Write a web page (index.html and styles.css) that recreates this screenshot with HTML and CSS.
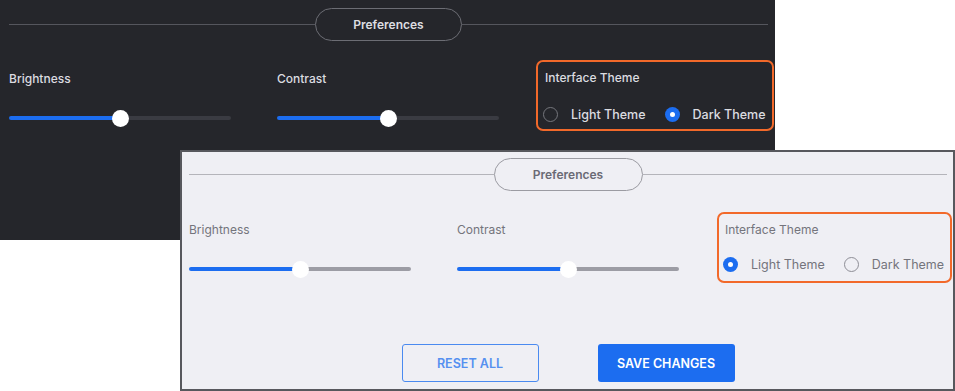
FILE: index.html
```html
<!DOCTYPE html>
<html>
<head>
<meta charset="UTF-8">
<title>Preferences</title>
<link rel="stylesheet" href="styles.css">
</head>
<body>

	<div class="stage">

		<!-- dark version -->
		<div class="panel dark">
			<div class="head">
				<span class="rule"></span>
				<span class="pill">Preferences</span>
				<span class="rule"></span>
			</div>
			<div class="row">
				<div class="col">
					<div class="label">Brightness</div>
					<div class="slider"><span class="fill" style="width:50%"></span><span class="knob"></span><span class="rest"></span></div>
				</div>
				<div class="col second">
					<div class="label">Contrast</div>
					<div class="slider"><span class="fill" style="width:50%"></span><span class="knob"></span><span class="rest"></span></div>
				</div>
				<div class="theme">
					<div class="label">Interface Theme</div>
					<div class="radios">
						<label class="radio"><span class="dot"></span>Light Theme</label>
						<label class="radio on"><span class="dot"></span>Dark Theme</label>
					</div>
				</div>
			</div>
		</div>

		<!-- light version, lies over the dark one -->
		<div class="panel light">
			<div class="head">
				<span class="rule"></span>
				<span class="pill">Preferences</span>
				<span class="rule"></span>
			</div>
			<div class="row">
				<div class="col">
					<div class="label">Brightness</div>
					<div class="slider"><span class="fill" style="width:50%"></span><span class="knob"></span><span class="rest"></span></div>
				</div>
				<div class="col second">
					<div class="label">Contrast</div>
					<div class="slider"><span class="fill" style="width:50%"></span><span class="knob"></span><span class="rest"></span></div>
				</div>
				<div class="theme">
					<div class="label">Interface Theme</div>
					<div class="radios">
						<label class="radio on"><span class="dot"></span>Light Theme</label>
						<label class="radio"><span class="dot"></span>Dark Theme</label>
					</div>
				</div>
			</div>
			<div class="buttons">
				<button class="btn ghost">RESET ALL</button>
				<button class="btn solid">SAVE CHANGES</button>
			</div>
		</div>

	</div>

</body>
</html>
```

FILE: styles.css
```css
body, div, span, label, button{
	margin : 0;
	padding : 0;
	box-sizing : border-box;
}
body{
	background : #ffffff;
	font-family : Inter, "Noto Sans", sans-serif;
	font-size : 12px;
}
.stage{
	position : relative;
	width : 955px;
	height : 391px;
}

/* panel common */
.panel{
	width : 775px;
}
.dark{
	height : 240px;
	background : #25262b;
	padding : 8px 7px 0 9px;
}
.light{
	position : absolute; /* second window drawn over the first one */
	left : 180px;
	top : 150px;
	height : 241px;
	background : #efeff4;
	border : 2px solid #57585d;
	padding : 6px 6px 0 7px;
}

/* header with pill */
.head{
	display : flex;
	align-items : center;
	height : 33px;
}
.rule{
	flex : 1;
	height : 1px;
}
.pill{
	width : 147px;
	height : 33px;
	line-height : 31px;
	border-radius : 17px;
	text-align : center;
	font-size : 12px;
	font-weight : 600;
}
.dark .rule{ background : #55565d; }
.dark .pill{ border : 1px solid #6c6d74; color : #dedee2; }
.light .rule{ background : #b4b4ba; }
.light .pill{ border : 1px solid #9b9ba2; color : #6a6a74; width : 149px; }

/* columns */
.row{
	display : flex;
	margin-top : 19px;
}
.light .row{ margin-top : 21px; }
.col{
	width : 222px;
	flex : none;
	padding-top : 11px;
}
.light .col{ padding-top : 10px; }
.col.second{
	margin-left : 46px;
}
.label{
	line-height : 16px;
	font-size : 12px;
	white-space : nowrap;
}
.dark .label{ color : #dcdce0; font-weight : 500; }
.light .label{ color : #74747c; }
.theme .label{ padding-left : 2px; }

/* sliders */
.slider{
	display : flex;
	align-items : center;
	height : 16px;
	margin-top : 23px;
}
.fill{
	height : 4px;
	border-radius : 2px 0 0 2px;
	background : #1c6df0;
	margin-right : -8px;
}
.knob{
	width : 17px;
	height : 17px;
	border-radius : 50%;
	background : #ffffff;
	position : relative; /* thumb sits over the track */
	z-index : 1;
	flex : none;
}
.rest{
	flex : 1;
	height : 4px;
	border-radius : 0 2px 2px 0;
	margin-left : -8px;
}
.dark .rest{ background : #3a3b42; }
.light .rest{ background : #9c9ca4; }

/* interface theme box */
.theme{
	flex : none;
	width : 238px;
	margin-left : 37px;
	border : 2px solid #f2692a;
	border-radius : 7px;
	padding : 8px 0 7px 5px;
	height : 71px;
}
.light .theme{ width : 235px; margin-left : 38px; padding-left : 4px; }
.radios{
	display : flex;
	margin-top : 20px;
}
.light .radios{ margin-top : 18px; }
.radio{
	display : flex;
	align-items : center;
	height : 16px;
	font-size : 12.5px;
	margin-right : 19px;
	white-space : nowrap;
	flex : none;
}
.dark .radio{ color : #dcdce0; font-weight : 500; }
.light .radio{ color : #74747c; }
.dot{
	width : 15px;
	height : 15px;
	border-radius : 50%;
	margin-right : 13px;
	flex : none;
}
.dark .dot{ border : 1.5px solid #75767c; }
.light .dot{ border : 1px solid #8e8e96; }
.radio.on .dot{
	border : none;
	background : #1c6df0;
	position : relative;
}
.radio.on .dot::after{
	content : "";
	position : absolute; /* centre mark of the checked radio */
	left : 5px;
	top : 5px;
	width : 5px;
	height : 5px;
	border-radius : 50%;
	background : #ffffff;
}

/* buttons */
.buttons{
	display : flex;
	justify-content : center;
	gap : 59px;
	margin-top : 61px;
}
.btn{
	width : 137px;
	height : 38px;
	border-radius : 3px;
	font-family : Inter, "Noto Sans", sans-serif;
	font-size : 12.5px;
	font-weight : 600;
	cursor : pointer;
}
.ghost{
	background : transparent;
	border : 1px solid #4a8af0;
	color : #5590f0;
}
.solid{
	background : #1c6df0;
	border : none;
	color : #ffffff;
}
```
